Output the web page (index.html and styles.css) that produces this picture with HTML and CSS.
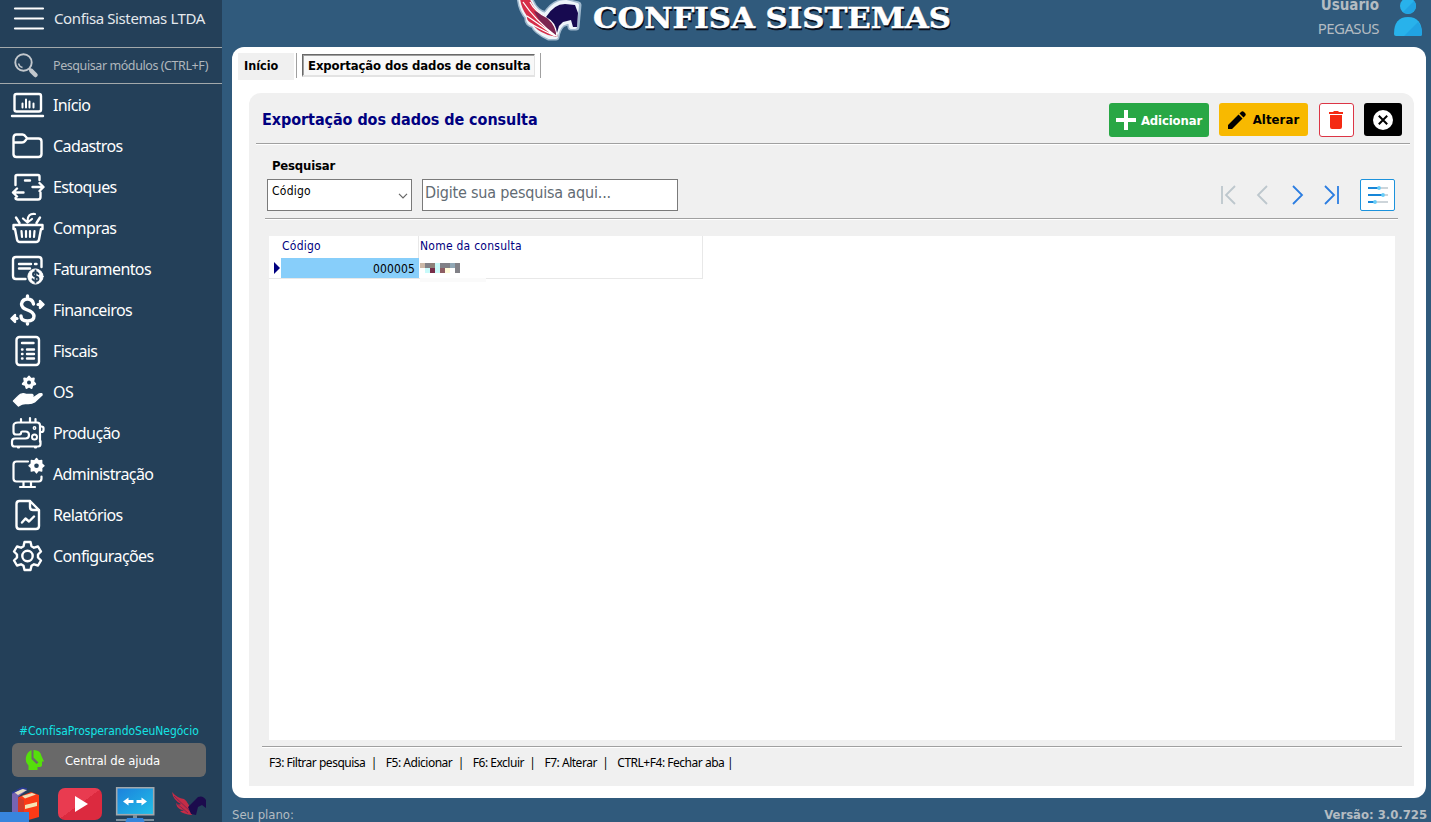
FILE: index.html
```html
<!DOCTYPE html>
<html lang="pt-BR">
<head>
<meta charset="utf-8">
<title>Confisa Sistemas</title>
<link rel="stylesheet" href="styles.css">
</head>
<body>
<div class="app">
  <aside class="sidebar">
    <div class="company">
      <svg class="burger" width="32" height="24" viewBox="0 0 32 24" stroke="#fff" stroke-width="2.2" stroke-linecap="round"><path d="M2 1.500h28M2 11.500h28M2 21.500h28"/></svg>
      <span>Confisa Sistemas LTDA</span>
    </div>
    <div class="module-search">
      <svg width="26" height="26" viewBox="0 0 26 26" fill="none" stroke="#c3c8cd"><circle cx="9.500" cy="9.500" r="8.200" stroke-width="1.900"/><path d="M4.500 10.500a5.500 5.500 0 0 0 4 4" stroke-width="1.300"/><path d="M15 15.500l2 2" stroke-width="2.500"/><path d="M17.500 18l4 4" stroke-width="4.500" stroke-linecap="round"/></svg>
      <span>Pesquisar módulos (CTRL+F)</span>
    </div>
    <nav class="menu">
      <a class="item"><svg viewBox="0 0 36 34"><rect x="5.500" y="6" width="26.500" height="17.500" rx="2"/><path d="M3 28h31"/><path d="M13.500 19.500v-4M17 19.500v-8M20.500 19.500v-6M24.500 19.500v-4" stroke-width="2"/></svg><span>Início</span></a>
      <a class="item"><svg viewBox="0 0 36 34"><path d="M4.500 25.500V9q0-3.500 3-3.500h6q2 0 3.500 2.500l1.500 1.500h11q3 0 3 3v12.500q0 3-3 3h-22q-3 0-3-3M4.500 13.500H13q2 0 3-1.500l2-2.500"/></svg><span>Cadastros</span></a>
      <a class="item"><svg viewBox="0 0 36 34"><path d="M6.500 15V6.500q0-1.500 1.500-1.500h21q1.500 0 1.500 1.500V10M16 10.500h5M23.500 17H34M30.500 13l4 4-4 4M31.500 22.500V27q0 2.500-2.500 2.500H9q-2.500 0-2.500-1.500M14.500 22.500H4M8 18.500l-4 4 4 4"/></svg><span>Estoques</span></a>
      <a class="item"><svg viewBox="0 0 36 34"><path d="M4.500 14h29v4H32l-2 10.500q-.5 2.500-3 2.500H11q-2.500 0-3-2.500L6 18H4.500zM10.500 12L7 6.500M27.500 12L31 6.500"/><path d="M12.500 20l.5 6M17 20v6M21 20v6M25.500 20l-.5 6M26 3q-7.500-1-7.500 7M14 7.500l4.500 4L23 8" stroke-width="2.200"/></svg><span>Compras</span></a>
      <a class="item"><svg viewBox="0 0 36 34"><path d="M16.500 27H7q-3 0-3-3V8q0-3 3-3h22.500q3 0 3 3v7M10 12h12M10 16.500h11M26 12h1.500"/><circle cx="26.500" cy="24.500" r="7.600" fill="#fff" stroke="#fff" stroke-width="1"/><path d="M29.500 22q-1-1.800-3-1.800-2.500 0-2.500 2 0 1.800 2.500 2.300 3 .4 3 2.500t-3 2q-2.300 0-3-1.800M26.500 18.500v12" stroke="#244059" stroke-width="1.900"/></svg><span>Faturamentos</span></a>
      <a class="item"><svg viewBox="0 0 36 34"><path d="M24.500 11q-1-5-6-5t-6 5q0 4 6 6t6.500 6q0 5-6.500 5T12 23M18.500 3v3M18.500 28v3" stroke-width="3.400"/><path d="M29 11.500h4" stroke-width="3"/><path d="M31 8l3.500 3.500L31 15zM6 22l-3.500 3.500L6 29z" fill="#fff"/><path d="M8 25.500H4" stroke-width="3"/></svg><span>Financeiros</span></a>
      <a class="item"><svg viewBox="0 0 36 34"><rect x="7.500" y="3" width="22.500" height="28" rx="3"/><path d="M13 9h11.500M18 15.500h7M18 20h7M18 24.500h7"/><path d="M13 15.500h.5M13 20h.5M13 24.500h.5"/></svg><span>Fiscais</span></a>
      <a class="item"><svg viewBox="0 0 36 34"><path d="M20 1.500l1.800 2.400 3-.3-.6 3 2 2.400-2.900 1.100-.8 2.900-2.500-1.700-2.500 1.700-.8-2.900-2.900-1.100 2-2.400-.6-3 3 .3z" fill="#fff" stroke-width="2"/><circle cx="20" cy="7.500" r="2" fill="#244059" stroke="none"/><path d="M4.500 26l4.500-4.500q3.500-4 8-2h6q2 1 0 3l-5 .5h6l6-4q3.500-1 3 1l-7.500 7q-3 2-8 1.500-4-.5-8 2.500z" fill="#fff" stroke-width="1.500"/></svg><span>OS</span></a>
      <a class="item"><svg viewBox="0 0 36 34"><path d="M9 6.500h19q3 0 3 3V26M31.500 25v3q0 2.500-2.500 2.500H5.500Q3 30.500 3 28v-2.500q0-3 3-3h10.500q3.500 0 3.500-3.500t-3.500-3.500H13q-1 0-1 1.500T9.500 18.500H7Q4.500 18.500 4.500 16v-6q0-3.500 4.500-3.500M31.500 10.500h1q2 0 2 1.500v2q0 2-2 2h-1M12 3v3M21 2v4M26.500 3v3M9 31.500h1M26 31.500h1" stroke-width="2.200"/><circle cx="25.500" cy="12" r=".7"/><circle cx="25.500" cy="21" r="2.500" stroke-width="2"/></svg><span>Produção</span></a>
      <a class="item"><svg viewBox="0 0 36 34"><path d="M19 4.500H7.500q-3 0-3 3v14q0 3 3 3h22q3 0 3-3v-2M14.500 25v4.500M22 25v4.500M11 30h15" stroke-width="2.200"/><path d="M27.500 1.500l2 2.500 3.200-.6v3.300l2.300 2-2.300 2V14l-3.200-.6-2 2.500-2-2.500-3.200.6v-3.300l-2.300-2 2.300-2V3.400l3.200.6z" fill="#fff" stroke-width="1.400"/><circle cx="27.500" cy="8.700" r="2.300" fill="#244059" stroke="none"/></svg><span>Administração</span></a>
      <a class="item"><svg viewBox="0 0 36 34"><path d="M21 3H10.500q-3 0-3 3v22q0 3 3 3H27q3 0 3-3V12zM21 3v6q0 3 3 3h6M13 24.500l3.500-4 3.500 3 5-5"/></svg><span>Relatórios</span></a>
      <a class="item"><svg viewBox="0 0 36 34"><path d="M15.500 3h6l1 4.200 2.500 1.500 4-1.200 3 5-3 3v3l3 3-3 5-4-1.200-2.500 1.500-1 4.200h-6l-1-4.200-2.500-1.500-4 1.200-3-5 3-3v-3l-3-3 3-5 4 1.200 2.500-1.500z"/><circle cx="18.500" cy="17" r="5.200"/></svg><span>Configurações</span></a>
    </nav>
    <div class="hashtag"><span>#ConfisaProsperandoSeuNegócio</span></div>
    <div class="help">
      <svg width="20" height="22" viewBox="0 0 20 22"><path d="M3.500 21v-4.500Q0 13 1 8q1-5 5.500-7v9l5 5 2-1.500-5-5V1q7 0 8 6l2.500 5.500H17V16q0 2-3 2h-1.500v3z" fill="#55df0b"/></svg>
      <span>Central de ajuda</span>
    </div>
    <div class="shortcuts">
      <svg width="222" height="40" viewBox="0 0 222 40">
        <defs><linearGradient id="yt" x1="0" y1="0" x2="1" y2="1"><stop offset=".5" stop-color="#e93b50"/><stop offset=".5" stop-color="#dc2a3f"/></linearGradient><linearGradient id="scr" x1="0" y1="0" x2="1" y2="1"><stop offset="0" stop-color="#1c80dc"/><stop offset="1" stop-color="#20c0e8"/></linearGradient></defs>
        <path d="M12 6l9-5 6 2-9 7v18l-6-2z" fill="#7664b2"/><path d="M14 5l9-3 4 1-9 5z" fill="#e8dfc0"/><path d="M12 6l10-5 5 1" fill="none" stroke="#2a3b94" stroke-width="1.500"/>
        <path d="M19 10l12-5 8 3v22l-14 4-6-4z" fill="#fb3a16"/><path d="M22 9l10-3 4 1.500-11 4z" fill="#f2dfb4"/><path d="M25 18l12-3v4l-12 3z" fill="#f4e4b4"/><path d="M18 10v20l6 3V13z" fill="#cf3c2b"/>
        <rect x="0" y="25" width="29" height="15" fill="#3885dd"/>
        <rect x="58" y="1" width="44" height="32" rx="7" fill="url(#yt)"/><path d="M75 9v16l13-8z" fill="#fff"/>
        <rect x="116.700" y=".7" width="37" height="27" fill="url(#scr)" stroke="#a1a8ad" stroke-width="1.600"/><path d="M133 28h4v4h17v2h-38v-2h17z" fill="#7b909f"/><path d="M127 31h16l2 5h-20z" fill="#3585db"/><path d="M123 14.500l5.500-4v2.500h5v3h-5v2.500zM147 14.500l-5.500-4v2.500h-5v3h5v2.500z" fill="#fff"/>
        <path d="M172 5q5 6 12 7 5 3 8 16-9-1-12-4 3 0 4-1-6 0-8-6 3 1 5 0-8-4-9-12z" fill="#c52c46"/><path d="M174 9l17 16M176 16l12 10" stroke="#7c2852"/><path d="M188 20l10-10q5-2 8 3v8l-4-3-4 2-2 8-5-1z" fill="#1c0b4d"/>
      </svg>
    </div>
  </aside>

  <main class="main">
    <header class="topbar">
      <svg class="brand" width="450" height="47" viewBox="0 0 450 47">
        <path d="M8-4q1 14 8 21-1 6 6 8 2 6 15 12h7q1-8 6-13l8-3 1 6h5l2-22-12-3q-12 0-20 13Q22 13 17-3z" fill="#dbe8f3" stroke="#9fb8cd" stroke-width="7" stroke-linejoin="round"/>
        <path d="M8-4q1 14 8 21-1 6 6 8 2 6 15 12h7q1-8 6-13l8-3 1 6h4l2-22-11-3q-12 0-20 13Q22 13 17-3z" fill="#eef5fa" stroke="#eef5fa" stroke-width="4" stroke-linejoin="round"/>
        <path d="M8-2q1 10 7 18-1 5 6 8 2 6 15 11l9 2Q46 28 36 18 23 13 17-3z" fill="#d62e49"/>
        <path d="M22 11q14 4 21 15l3 11-9-5Q26 20 22 11z" fill="#7c2450"/>
        <path d="M11 2q12 18 33 34M15 16q12 8 28 20M21 25q11 6 22 11M18 2q5 10 18 16 9 8 9 19" fill="none" stroke="#fff" stroke-width="1.300"/>
        <path d="M34 17q8-13 19-13l10 1 3 8-1 14h-4l-2-7-8 2-4 4-2 7q-1-11-11-16z" fill="#170a50"/>
        <g font-family="DejaVu Serif, serif" font-weight="700" font-size="27.500" stroke-width=".5"><text x="82" y="29.500" textLength="358" lengthAdjust="spacingAndGlyphs" fill="#070b18" stroke="#070b18">CONFISA SISTEMAS</text><text x="81" y="27.500" textLength="358" lengthAdjust="spacingAndGlyphs" fill="#fff" stroke="#fff">CONFISA SISTEMAS</text></g>
      </svg>
      <div class="user">
        <div class="user-text"><b>Usuário</b><span>PEGASUS</span></div>
        <svg width="28" height="37" viewBox="0 0 28 37"><circle cx="14" cy="6" r="8" fill="#28b2eb"/><path d="M0 34q0-17 14-17t14 17q0 2-2 2H2q-2 0-2-2z" fill="#28b2eb"/><path d="M10 36L24 22q4 5 4 12 0 2-2 2zM9 12l11-11q4 5 0 10-5 5-11 1z" fill="#21a3e3"/></svg>
      </div>
    </header>

    <section class="window">
      <div class="tabs">
        <div class="tab">Início</div>
        <div class="tab-active"><span>Exportação dos dados de consulta</span></div>
      </div>
      <div class="panel">
        <div class="panel-head">
          <h1>Exportação dos dados de consulta</h1>
          <div class="actions">
            <button class="btn add"><svg width="20" height="20" viewBox="0 0 20 20"><path d="M8 0h4v8h8v4h-8v8H8v-8H0V8h8z" fill="#fff"/></svg><span>Adicionar</span></button>
            <button class="btn edit"><svg width="18" height="18" viewBox="0 0 18 18"><path d="M0 14L10.500 3.500l4 4L4 18H0zM11.500 2.500L13 1q1.500-1.500 3 0l1 1q1.500 1.500 0 3l-1.500 1.500z"/></svg><span>Alterar</span></button>
            <button class="btn trash"><svg width="14" height="18" viewBox="0 0 14 18"><path d="M0 1h4l1-1h4l1 1h4v2H0zM1 4h12v12q0 2-2 2H3q-2 0-2-2z" fill="#f42a12"/></svg></button>
            <button class="btn close"><svg width="20" height="20" viewBox="0 0 20 20"><circle cx="10" cy="10" r="10" fill="#fff"/><path d="M5.800 5.800l8.400 8.400M14.200 5.800l-8.400 8.400" stroke="#000" stroke-width="2"/></svg></button>
          </div>
        </div>
        <div class="filters">
          <div class="filter-label">Pesquisar</div>
          <div class="filter-row">
            <div class="select"><span>Código</span><svg width="10" height="6" viewBox="0 0 10 6" fill="none" stroke="#666" stroke-width="1.200"><path d="M1 .8l4 4 4-4"/></svg></div>
            <div class="input"><span>Digite sua pesquisa aqui...</span></div>
            <svg class="pager" width="120" height="20" viewBox="0 0 120 20" fill="none" stroke-width="1.800"><path d="M2 1v18M15 1L6 10l9 9M47 1l-9 9 9 9" stroke="#bdc7cd"/><path d="M73 1l9 9-9 9M105 1l9 9-9 9M118 1v18" stroke="#2b7de1"/></svg>
            <button class="tune"><svg width="20" height="18" viewBox="0 0 20 18"><path d="M0 2h11M0 9h15M0 16h7" stroke="#1786d8" stroke-width="1.800"/><path d="M11 2h9M15 9h5M7 16h13" stroke="#cdd5da" stroke-width="1.800"/><g fill="#68cdf8"><circle cx="11" cy="2" r="1.900"/><circle cx="15" cy="9" r="1.900"/><circle cx="7" cy="16" r="1.900"/></g></svg></button>
          </div>
        </div>
        <div class="grid">
          <div class="grid-head"><div class="c1">Código</div><div class="c2">Nome da consulta</div></div>
          <div class="grid-row"><div class="mark"></div><div class="v1">000005</div><div class="v2"><svg width="66" height="24" viewBox="0 0 66 24" shape-rendering="crispEdges"><path d="M0 20h66v4H0z" fill="#fafafa"/><path d="M0 5h5v5H0z" fill="#cbb8a8"/><path d="M5 5h5v5H5zM20 5h10v5H20zM35 5h5v10h-5z" fill="#818187"/><path d="M10 5h5v5h-5z" fill="#8e8179"/><path d="M15 5h5v10h-5zM5 10h5v5H5z" fill="#c8fafa"/><path d="M30 5h5v5h-5z" fill="#90a7b5"/><path d="M10 10h5v5h-5z" fill="#762e48"/><path d="M20 10h5v5h-5z" fill="#8d5d63"/><path d="M25 10h5v5h-5z" fill="#fffbd9"/></svg></div></div>
        </div>
        <footer class="hints"><span>F3: Filtrar pesquisa &nbsp;|</span><span>F5: Adicionar &nbsp;|</span><span>F6: Excluir &nbsp;|</span><span>F7: Alterar &nbsp;|</span><span>CTRL+F4: Fechar aba |</span></footer>
      </div>
    </section>
    <div class="status"><span>Seu plano:</span><b>Versão: 3.0.725</b></div>
  </main>
</div>
</body>
</html>
```
FILE: styles.css
```css
* { box-sizing: border-box; }
body { margin: 0; overflow: hidden; background: #305a7c; font-family: "DejaVu Sans Condensed", "Noto Sans", sans-serif; font-size: 12px; color: #000; }
svg { display: block; flex: none; }
span, b { white-space: nowrap; }
button { border: 0; padding: 0; font: inherit; }

.app { display: grid; grid-template-columns: 222px 1fr; width: 1431px; height: 822px; }

/* sidebar */
.sidebar { display: flex; flex-direction: column; background: #244059; color: #fff; overflow: hidden; }
.company { height: 47px; display: flex; gap: 9px; padding: 7px 0 0 13px; align-items: flex-start; font: 15px/23px "Noto Sans", sans-serif; letter-spacing: -.39px; color: #e4e9ed; }
.module-search { height: 37px; display: flex; align-items: center; gap: 13px; padding-left: 14px; border-top: 1px solid #a3a9ab; border-bottom: 1px solid #a3a9ab; font: 12.5px "Noto Sans", sans-serif; letter-spacing: -.42px; color: #b0b7bd; }
.menu { display: flex; flex-direction: column; }
.item { height: 41px; display: flex; align-items: center; gap: 8px; padding-left: 9px; font: 16px "Noto Sans", sans-serif; letter-spacing: -.6px; color: #fff; }
.item svg { width: 36px; height: 34px; fill: none; stroke: #fff; stroke-width: 2.4; stroke-linecap: round; stroke-linejoin: round; }
.hashtag { margin-top: auto; height: 24px; padding-left: 19px; font: 12px/24px "DejaVu Sans Condensed", sans-serif; letter-spacing: -.03px; color: #14e4e4; }
.help { flex: none; height: 34px; width: 194px; margin-left: 12px; border-radius: 6px; background: #696969; display: flex; align-items: center; gap: 20px; padding-left: 13px; font-size: 13px; letter-spacing: -.12px; }
.shortcuts { height: 35px; margin-top: 10px; overflow: hidden; }

/* main column */
.main { display: grid; grid-template-rows: 47px 751px 24px; min-width: 0; }
.topbar { display: flex; justify-content: space-between; padding: 0 9px 0 290px; overflow: hidden; }
.user { display: flex; gap: 15px; color: #b4bcc2; }
.user-text { display: flex; flex-direction: column; align-items: flex-end; font: 15px/23px "Noto Sans", sans-serif; letter-spacing: -.6px; margin-top: -6px; }
.user-text b { font: 700 15px/23px "DejaVu Sans Condensed", sans-serif; letter-spacing: 0; }

/* window with tabs */
.window { margin: 0 5px 0 10px; padding: 6px 12px 12px 6px; border-radius: 12px; background: #fff; display: flex; flex-direction: column; }
.tabs { flex: none; height: 40px; display: flex; font-weight: 700; font-size: 12.5px; line-height: 25px; }
.tab { width: 56px; height: 27px; padding-left: 6px; background: #f0f0f0; }
.tab-active { margin-left: 2px; height: 25px; width: 245px; padding: 1px 5px; border-left: 1px solid #a0a0a0; border-right: 1px solid #a0a0a0; font-size: 13px; letter-spacing: -.1px; }
.tab-active span { display: block; width: 233px; height: 23px; line-height: 22px; padding-left: 5px; border: 1px solid #e3e3e3; border-bottom-width: 2px; border-top-color: #696969; border-left-color: #696969; box-shadow: inset 1px 1px #a0a0a0; background: #f8f8f8; }
.panel { flex: 1; margin-left: 11px; border-radius: 12px 12px 0 0; background: #f0f0f0; }
.panel-head { height: 52px; margin: 0 4px 0 7px; padding: 10px 8px 0 6px; border-bottom: 1px solid #fff; box-shadow: inset 0 -1px #a0a0a0; display: flex; justify-content: space-between; }
h1 { margin: 0; font: 700 16px/34px "DejaVu Sans Condensed", sans-serif; letter-spacing: -.07px; color: #000080; }
.actions { display: flex; gap: 10px; }
.btn { height: 33px; border-radius: 3px; display: flex; align-items: center; justify-content: center; font-weight: 700; font-size: 13px; }
.add { width: 100px; height: 34px; gap: 5px; background: #28a745; color: #fff; letter-spacing: -.14px; }
.edit { width: 89px; gap: 7px; background: #f8b900; color: #000; letter-spacing: .1px; }
.trash { width: 35px; height: 34px; margin-left: 1px; padding-right: 1px; border: 1px solid #dc3545; background: #fff; }
.close { width: 38px; background: #000; }

/* search row */
.filters { height: 75px; margin: 0 16px; padding: 11px 3px 0 2px; border-bottom: 1px solid #fff; box-shadow: inset 0 -1px #a0a0a0; }
.filter-label { height: 23px; padding-left: 5px; font-weight: 700; font-size: 13px; letter-spacing: -.2px; line-height: 19px; }
.filter-row { display: flex; height: 32px; }
.select { width: 145px; border: 1px solid #7a7a7a; background: #fff; display: flex; justify-content: space-between; align-items: flex-start; padding: 4px 3px 0 4px; letter-spacing: .25px; }
.select svg { margin-top: 9px; }
.input { width: 256px; margin-left: 10px; border: 1px solid #7a7a7a; background: #fff; padding-left: 2px; font: 16px/25px "DejaVu Sans Condensed", sans-serif; letter-spacing: -.18px; color: #626b73; }
.pager { margin: 6px 20px 0 auto; }
.tune { width: 35px; height: 32px; border: 1px solid #1c92dc; border-radius: 2px; background: #fff; display: flex; align-items: center; justify-content: center; }

/* data grid */
.grid { height: 504px; margin: 16px 19px 0 20px; background: #fff; }
.grid-head, .grid-row { display: flex; width: 434px; border-right: 1px solid #e8e8e8; letter-spacing: .25px; }
.grid-head { height: 22px; line-height: 20px; color: #000080; }
.c1 { width: 150px; padding-left: 13px; border-right: 1px solid #e8e8e8; }
.c2 { padding-left: 1px; }
.grid-row { height: 21px; border-bottom: 1px solid #e8e8e8; line-height: 22px; }
.mark { width: 12px; padding: 4px 0 0 5px; }
.mark::before { content: ""; display: block; border: solid transparent; border-width: 6px 0 6px 6px; border-left-color: #000080; }
.v1 { width: 138px; padding-right: 4px; text-align: right; background: #87cefa; letter-spacing: .15px; }
.v2 { padding-left: 1px; }
.hints { margin: 6px 12px 0 13px; height: 39px; padding: 6px 0 0 7px; border-top: 1px solid #a0a0a0; box-shadow: inset 0 1px #fff; display: flex; gap: 9px; font: 12px/20px "Noto Sans", sans-serif; letter-spacing: -.48px; }
.status { display: flex; justify-content: space-between; padding: 5px 4px 0 10px; line-height: 24px; font-size: 13px; letter-spacing: -.03px; color: #b4bcc2; }
```
